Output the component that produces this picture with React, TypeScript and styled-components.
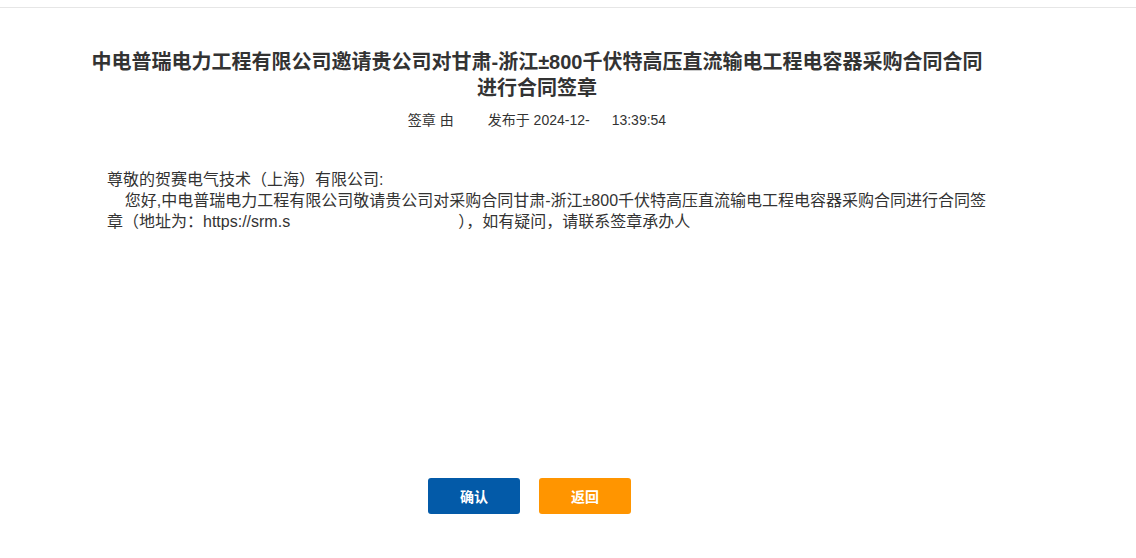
import * as React from 'react';
import styled, { createGlobalStyle } from 'styled-components';

const GlobalStyle = createGlobalStyle`
  html, body {
    margin: 0;
    padding: 0;
    background: #fff;
  }
  body {
    font-family: "Liberation Sans", Arial, "Noto Sans CJK SC", sans-serif;
    color: #333;
  }
`;

type ButtonKind = 'primary' | 'back';

export default function App() {
  return (
    <>
      <GlobalStyle />
      <TopBar />
      <Content>
        <Title>中电普瑞电力工程有限公司邀请贵公司对甘肃-浙江±800千伏特高压直流输电工程电容器采购合同合同进行合同签章</Title>
        <Meta>
          签章 由<Blank $w={34} />发布于 2024-12-<Blank $w={22} />13:39:54
        </Meta>
        <Body>
          <Para>尊敬的贺赛电气技术（上海）有限公司:</Para>
          <Para>
            &nbsp;&nbsp;&nbsp;&nbsp;您好,中电普瑞电力工程有限公司敬请贵公司对采购合同甘肃-浙江±800千伏特高压直流输电工程电容器采购合同进行合同签章（地址为：https://srm.s<Blank $w={168} />），如有疑问，请联系签章承办人<Blank $w={60} />
          </Para>
        </Body>
        <ButtonRow>
          <ActionButton $kind="primary">确认</ActionButton>
          <ActionButton $kind="back">返回</ActionButton>
        </ButtonRow>
      </Content>
    </>
  );
}

const TopBar = styled.div`
  height: 7px;
  border-bottom: 1px solid #e6e6e6;
`;

const Content = styled.main`
  width: 910px;
  margin-left: 82px;
  display: flex;
  flex-direction: column;
`;

const Title = styled.h1`
  margin: 41px 0 0;
  font-family: "Liberation Sans", Arial, "Noto Sans CJK SC", sans-serif;
  font-size: 20px;
  font-weight: bold;
  line-height: 26px;
  text-align: center;
  color: #333;
`;

const Meta = styled.div`
  margin-top: 9px;
  font-size: 14px;
  line-height: 20px;
  text-align: center;
  color: #333;
`;

const Blank = styled.span<{ $w: number }>`
  display: inline-block;
  width: ${p => p.$w}px;
`;

const Body = styled.section`
  margin: 39px 0 0 25px;
  width: 885px;
  min-height: 309px;
  font-size: 16px;
  line-height: 21px;
  color: #333;
`;

const Para = styled.p`
  margin: 0;
`;

const ButtonRow = styled.div`
  display: flex;
  justify-content: center;
  gap: 19px;
  padding-right: 15px;
`;

const ActionButton = styled.button<{ $kind: ButtonKind }>`
  width: 92px;
  height: 36px;
  border: none;
  border-radius: 3px;
  background: ${p => (p.$kind === 'primary' ? '#035aa8' : '#ff9500')};
  color: #fff;
  font-family: "Liberation Sans", Arial, "Noto Sans CJK SC", sans-serif;
  font-size: 14px;
  font-weight: bold;
  cursor: pointer;
`;
